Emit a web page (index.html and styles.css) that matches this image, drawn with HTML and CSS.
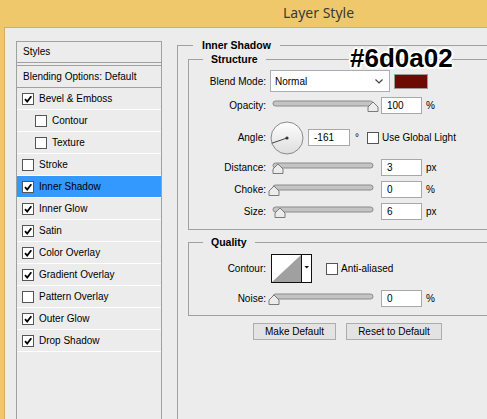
FILE: index.html
```html
<!DOCTYPE html>
<html lang="en">
<head>
    <meta charset="UTF-8">
    <title>Layer Style</title>
    <link rel="stylesheet" href="styles.css">
</head>
<body>
    <div class="titlebar">Layer Style</div>
    <div class="window">
        <div class="styles-list">
            <div class="styles-head">Styles</div>
            <div class="styles-blend">Blending Options: Default</div>
            <div class="style-item"><span class="check on"><svg viewBox="0 0 10 10"><path d="M2 5.2 L4.2 7.6 L8.3 2.2"/></svg></span>Bevel &amp; Emboss</div>
            <div class="style-item sub"><span class="check"></span>Contour</div>
            <div class="style-item sub"><span class="check"></span>Texture</div>
            <div class="style-item"><span class="check"></span>Stroke</div>
            <div class="style-item selected"><span class="check on"><svg viewBox="0 0 10 10"><path d="M2 5.2 L4.2 7.6 L8.3 2.2"/></svg></span>Inner Shadow</div>
            <div class="style-item"><span class="check on"><svg viewBox="0 0 10 10"><path d="M2 5.2 L4.2 7.6 L8.3 2.2"/></svg></span>Inner Glow</div>
            <div class="style-item"><span class="check on"><svg viewBox="0 0 10 10"><path d="M2 5.2 L4.2 7.6 L8.3 2.2"/></svg></span>Satin</div>
            <div class="style-item"><span class="check on"><svg viewBox="0 0 10 10"><path d="M2 5.2 L4.2 7.6 L8.3 2.2"/></svg></span>Color Overlay</div>
            <div class="style-item"><span class="check on"><svg viewBox="0 0 10 10"><path d="M2 5.2 L4.2 7.6 L8.3 2.2"/></svg></span>Gradient Overlay</div>
            <div class="style-item"><span class="check"></span>Pattern Overlay</div>
            <div class="style-item"><span class="check on"><svg viewBox="0 0 10 10"><path d="M2 5.2 L4.2 7.6 L8.3 2.2"/></svg></span>Outer Glow</div>
            <div class="style-item"><span class="check on"><svg viewBox="0 0 10 10"><path d="M2 5.2 L4.2 7.6 L8.3 2.2"/></svg></span>Drop Shadow</div>
        </div>

        <div class="main">
            <div class="group outer">
                <div class="group-title">Inner Shadow</div>

                <div class="group inner structure">
                    <div class="group-title">Structure</div>

                    <div class="row blend-row">
                        <span class="label">Blend Mode:</span>
                        <div class="select">Normal<svg class="chev" viewBox="0 0 8 5"><path d="M0.5 0.5 L4 4 L7.5 0.5"/></svg></div>
                        <div class="swatch"></div>
                    </div>

                    <div class="row">
                        <span class="label">Opacity:</span>
                        <svg class="slider" viewBox="0 0 110 17"><rect class="track" x="5" y="4" width="100" height="5" rx="2.5"/><path class="thumb" d="M105 5 L110 10 V14.5 H100 V10 Z"/></svg>
                        <div class="num">100</div>
                        <span class="unit">%</span>
                    </div>

                    <div class="row angle-row">
                        <span class="label">Angle:</span>
                        <svg class="dial" viewBox="0 0 34 34">
                            <defs>
                                <linearGradient id="dialFill" x1="0" y1="0" x2="0" y2="1">
                                    <stop offset="0" stop-color="#fdfdfd"/>
                                    <stop offset="1" stop-color="#dedede"/>
                                </linearGradient>
                            </defs>
                            <circle cx="17" cy="17" r="16" fill="url(#dialFill)" stroke="#8a8a8a"/>
                            <line x1="17" y1="17" x2="1.9" y2="22.2" stroke="#444" stroke-width="1"/>
                            <circle cx="17" cy="17" r="1.6" fill="#333"/>
                        </svg>
                        <div class="num wide">-161</div>
                        <span class="deg">°</span>
                        <span class="check plain"></span>
                        <span>Use Global Light</span>
                    </div>

                    <div class="row">
                        <span class="label">Distance:</span>
                        <svg class="slider" viewBox="0 0 110 17"><rect class="track" x="5" y="4" width="100" height="5" rx="2.5"/><path class="thumb" d="M10 5 L15 10 V14.5 H5 V10 Z"/></svg>
                        <div class="num">3</div>
                        <span class="unit">px</span>
                    </div>

                    <div class="row">
                        <span class="label">Choke:</span>
                        <svg class="slider" viewBox="0 0 110 17"><rect class="track" x="5" y="4" width="100" height="5" rx="2.5"/><path class="thumb" d="M6 5 L11 10 V14.5 H1 V10 Z"/></svg>
                        <div class="num">0</div>
                        <span class="unit">%</span>
                    </div>

                    <div class="row">
                        <span class="label">Size:</span>
                        <svg class="slider" viewBox="0 0 110 17"><rect class="track" x="5" y="4" width="100" height="5" rx="2.5"/><path class="thumb" d="M12 5 L17 10 V14.5 H7 V10 Z"/></svg>
                        <div class="num">6</div>
                        <span class="unit">px</span>
                    </div>
                </div>

                <div class="group inner quality">
                    <div class="group-title">Quality</div>

                    <div class="row contour-row">
                        <span class="label">Contour:</span>
                        <svg class="contour" viewBox="0 0 41 29">
                            <rect x="0.5" y="0.5" width="40" height="28" fill="#fff" stroke="#111"/>
                            <path d="M1 28 L30 1 V28 Z" fill="#a0a0a0"/>
                            <line x1="30.5" y1="0.5" x2="30.5" y2="28.5" stroke="#111"/>
                            <path d="M33.5 12 H38 L35.75 14.5 Z" fill="#111"/>
                        </svg>
                        <span class="check plain"></span>
                        <span>Anti-aliased</span>
                    </div>

                    <div class="row">
                        <span class="label">Noise:</span>
                        <svg class="slider" viewBox="0 0 110 17"><rect class="track" x="5" y="4" width="100" height="5" rx="2.5"/><path class="thumb" d="M6 5 L11 10 V14.5 H1 V10 Z"/></svg>
                        <div class="num">0</div>
                        <span class="unit">%</span>
                    </div>
                </div>

                <div class="buttons">
                    <button class="btn make">Make Default</button>
                    <button class="btn reset">Reset to Default</button>
                </div>
            </div>
        </div>
    </div>

    <div class="hex-note">#6d0a02</div>
</body>
</html>
```

FILE: styles.css
```css
body {
    margin: 0;
    height: 419px;
    overflow: hidden;
    background-color: #f0c86c;
    font-family: "Liberation Sans", Arial, sans-serif;
    font-size: 10px;
    color: #000;
    position: relative;
}
.titlebar {
    height: 27px;
    line-height: 25px;
    padding-left: 283px;
    font-family: "Noto Sans", "Open Sans", sans-serif;
    font-size: 14px;
    color: #3a3a3a;
}
.window {
    display: flex;
    align-items: flex-start;
    height: 391px;
    margin-left: 4px;
    background-color: #ececec;
    border-top: 1px solid #d5ae5e;
    border-left: 1px solid #d5ae5e;
}

/* left list */
.styles-list {
    width: 146px;
    height: 378px;
    box-sizing: border-box;
    margin: 13px 0 0 11px;
    border: 1px solid #a0a0a0;
    border-bottom: none;
    flex-shrink: 0;
}
.styles-head {
    height: 20px;
    line-height: 20px;
    padding-left: 6px;
    border-bottom: 1px solid #a0a0a0;
    margin-bottom: 2px;
}
.styles-blend {
    height: 21px;
    line-height: 21px;
    padding-left: 6px;
    border-top: 1px solid #a0a0a0;
    border-bottom: 1px solid #a0a0a0;
}
.style-item {
    height: 21px;
    display: flex;
    align-items: center;
    padding-left: 5px;
    border-bottom: 1px solid #fff;
}
.style-item.sub {
    padding-left: 18px;
}
.style-item.selected {
    background-color: #3399ff;
}
.check {
    width: 12px;
    height: 12px;
    box-sizing: border-box;
    border: 1px solid #555;
    background-color: #fff;
    margin-right: 5px;
    display: inline-flex;
    flex-shrink: 0;
}
.check svg {
    width: 10px;
    height: 10px;
}
.check path {
    fill: none;
    stroke: #000;
    stroke-width: 1.8;
}

/* right side */
.main {
    margin: 17px 0 0 15px;
}
.group {
    border: 1px solid #a0a0a0;
}
.outer {
    width: 310px;
    height: 374px;
    box-sizing: border-box;
    border-right: none;
    border-bottom: none;
}
.inner {
    width: 299px;
    box-sizing: border-box;
    margin-left: 10px;
    border-right: none;
}
.group-title {
    width: max-content;
    margin: -7px 0 0 15px;
    padding: 0 9px;
    line-height: 13px;
    font-size: 10.5px;
    font-weight: bold;
    background-color: #ececec;
}
.inner .group-title {
    margin-left: 14px;
    padding: 0 8px;
}
.structure {
    margin-top: 7px;
    padding-bottom: 9px;
}
.quality {
    margin-top: 12px;
    padding-bottom: 8px;
}
.row {
    display: flex;
    align-items: center;
    height: 17px;
    margin-top: 5px;
}
.label {
    width: 77px;
    text-align: right;
    margin-right: 2px;
    flex-shrink: 0;
}
.blend-row {
    height: 22px;
    margin-top: 4px;
}
.blend-row .label,
.contour-row .label {
    margin-right: 4px;
}
.select {
    width: 120px;
    height: 22px;
    box-sizing: border-box;
    border: 1px solid #abadb3;
    background-color: #fff;
    padding-left: 4px;
    display: flex;
    align-items: center;
    justify-content: space-between;
}
.chev {
    width: 8px;
    height: 5px;
    margin-right: 6px;
}
.chev path {
    fill: none;
    stroke: #444;
    stroke-width: 1.2;
}
.swatch {
    width: 34px;
    height: 15px;
    box-sizing: border-box;
    margin-left: 4px;
    border: 1px solid #9a9a9a;
    background-color: #6d0a02;
}
.slider {
    width: 110px;
    height: 17px;
    overflow: visible;
    flex-shrink: 0;
}
.track {
    fill: #c4c4c4;
    stroke: #8a8a8a;
    stroke-width: 1;
}
.thumb {
    fill: #ececec;
    stroke: #7a7a7a;
    stroke-width: 1;
}
.num {
    width: 41px;
    height: 17px;
    box-sizing: border-box;
    margin-left: 3px;
    padding-left: 5px;
    line-height: 15px;
    border: 1px solid #a8a8a8;
    background-color: #fff;
    flex-shrink: 0;
}
.unit {
    margin-left: 4px;
}
.angle-row {
    height: 33px;
    margin-top: 7px;
}
.dial {
    width: 34px;
    height: 34px;
    margin-left: 2px;
    flex-shrink: 0;
}
.num.wide {
    width: 42px;
    margin-left: 4px;
}
.deg {
    margin-left: 5px;
    margin-right: 8px;
}
.check.plain {
    margin-right: 3px;
}
.contour-row {
    height: 29px;
    margin-top: 5px;
}
.contour {
    width: 41px;
    height: 29px;
    margin-left: 1px;
    margin-right: 14px;
    flex-shrink: 0;
}
.quality .row + .row {
    margin-top: 7px;
}
.buttons {
    display: flex;
    gap: 10px;
    margin: 7px 0 0 75px;
}
.btn {
    height: 17px;
    padding: 0;
    font-family: "Liberation Sans", Arial, sans-serif;
    font-size: 10px;
    color: #000;
    background-color: #e3e3e3;
    border: 1px solid #adadad;
    border-radius: 0;
}
.make {
    width: 83px;
}
.reset {
    width: 96px;
}

/* annotation over the dialog */
.hex-note {
    position: absolute;
    left: 350px;
    top: 45px;
    line-height: 26px;
    font-size: 26px;
    font-weight: bold;
    color: #000;
    text-shadow: 2px 0 0 #fff, -2px 0 0 #fff, 0 2px 0 #fff, 0 -2px 0 #fff,
        1.5px 1.5px 0 #fff, -1.5px 1.5px 0 #fff, 1.5px -1.5px 0 #fff, -1.5px -1.5px 0 #fff;
}
```
